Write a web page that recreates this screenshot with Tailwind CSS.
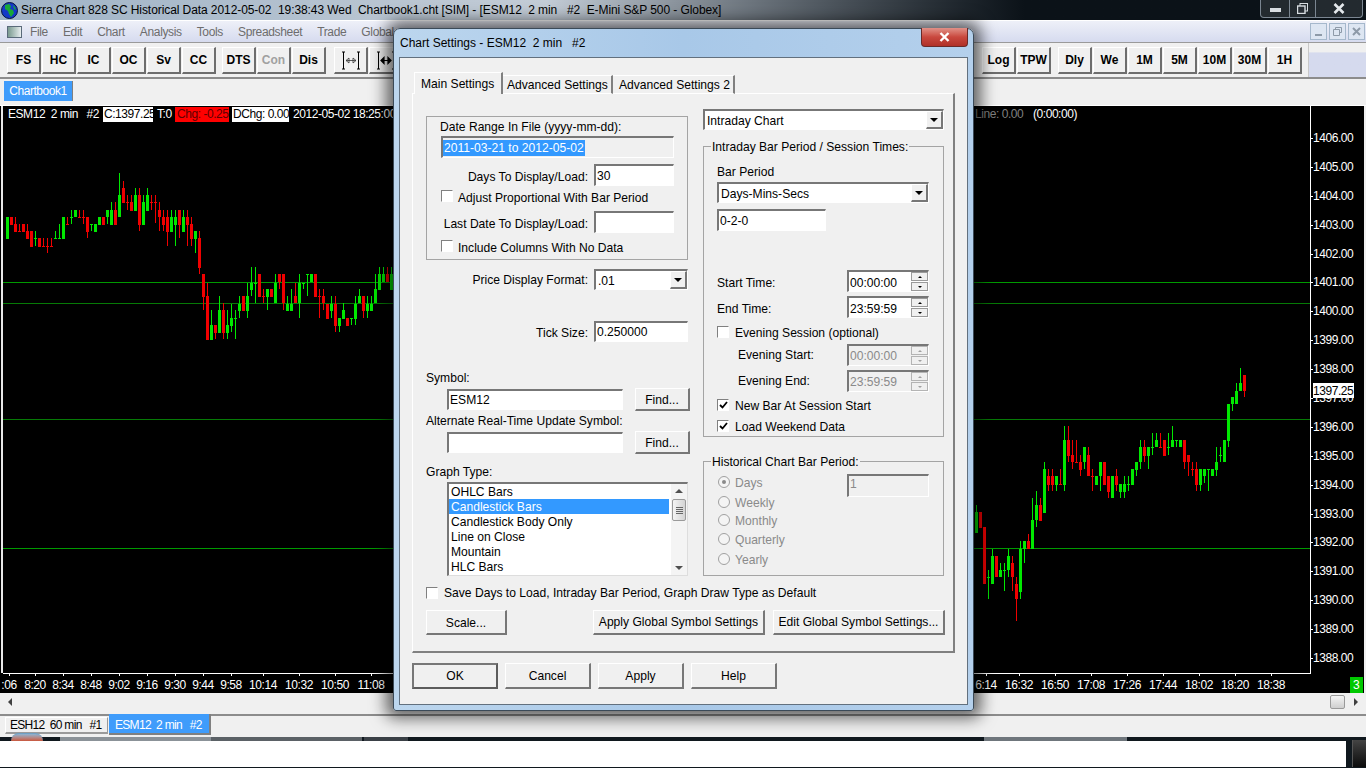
<!DOCTYPE html>
<html lang="en">
<head>
    <meta charset="UTF-8">
    <title>Sierra Chart - Chart Settings</title>
    <script src="https://cdn.jsdelivr.net/npm/@tailwindcss/browser@4"></script>
</head>
<body class="bg-black">
<div class="relative w-[1366px] h-[768px] overflow-hidden flex flex-col text-[12px] leading-[16px] text-black font-['Liberation_Sans',sans-serif]">

    <!-- app title bar -->
    <div class="h-[20px] shrink-0 flex items-center relative bg-linear-to-r from-[#9fb3c6] via-[#c3ccd6] via-40% to-[#0b1218] to-75%">
        <svg class="ml-[1px] w-[17px] h-[17px]" viewBox="0 0 17 17">
            <circle cx="8.5" cy="8.5" r="8" fill="#1438c8" stroke="#06143c"/>
            <path d="M4 3l4-1 2 2-1 3 3 1 1 3-3 4-2-3-1-3-3-2z" fill="#18a838"/>
            <path d="M12 3l2 2 1 3-2-1z" fill="#18a838"/>
        </svg>
        <span class="ml-[3px] whitespace-pre text-[12px] tracking-[-0.08px] text-black">Sierra Chart 828 SC Historical Data 2012-05-02  19:38:43 Wed  Chartbook1.cht [SIM] - [ESM12  2 min   #2  E-Mini S&amp;P 500 - Globex]</span>
        <div class="absolute left-[1260px] top-0 w-[103px] h-[18px] flex rounded-b-[4px] border border-t-0 border-[#7b8691] bg-white/10">
            <div class="w-[29px] flex items-center justify-center border-r border-[#7b8691]"><div class="w-[11px] h-[4px] bg-[#d8dde1] mt-[3px]"></div></div>
            <div class="w-[26px] flex items-center justify-center border-r border-[#7b8691]">
                <svg class="w-[11px] h-[11px]" viewBox="0 0 11 11"><rect x="3" y="0.5" width="7.5" height="7.5" fill="none" stroke="#d8dde1"/><rect x="0.5" y="3" width="7.5" height="7.5" fill="#2a3036" stroke="#d8dde1" stroke-width="1.4"/></svg>
            </div>
            <div class="flex-1 flex items-center justify-center">
                <svg class="w-[12px] h-[11px]" viewBox="0 0 12 11"><path d="M1.5 1l9 9M10.5 1l-9 9" stroke="#e4e8eb" stroke-width="2.6"/></svg>
            </div>
        </div>
    </div>

    <!-- menu bar -->
    <div class="h-[23px] shrink-0 border-t border-b border-t-white border-b-[#9a9a9a] flex items-center bg-linear-to-b from-[#eef0f8] to-[#d6dbef] relative">
        <div class="ml-[7px] w-[15px] h-[12px] border border-[#5a6a7a] bg-linear-to-r from-[#7a9a90] to-[#e8eef0]"></div>
        <div class="ml-[8px] flex gap-[15px] tracking-[-0.35px] text-[#6d6d6d]">
            <span>File</span><span>Edit</span><span>Chart</span><span>Analysis</span><span>Tools</span><span>Spreadsheet</span><span>Trade</span><span>Global</span>
        </div>
        <div class="absolute left-[1310px] top-[2px] flex gap-[2px]">
            <div class="w-[17px] h-[17px] border border-[#a5b8cc] bg-[#dde6f2] flex items-end justify-center pb-[3px]"><div class="w-[7px] h-[2px] bg-[#8d9aa8]"></div></div>
            <div class="w-[17px] h-[17px] border border-[#a5b8cc] bg-[#dde6f2] flex items-center justify-center">
                <svg class="w-[9px] h-[9px]" viewBox="0 0 9 9"><path d="M2.5 2.5v-2h6v5h-2M.5 2.5h6v6h-6z" fill="none" stroke="#8d9aa8"/></svg>
            </div>
            <div class="w-[17px] h-[17px] border border-[#a5b8cc] bg-[#dde6f2] flex items-center justify-center">
                <svg class="w-[9px] h-[9px]" viewBox="0 0 9 9"><path d="M1 1l7 7M8 1l-7 7" stroke="#8d9aa8" stroke-width="2"/></svg>
            </div>
        </div>
    </div>

    <!-- toolbar -->
    <div class="h-[36px] shrink-0 flex border-b-2 border-b-[#8c8c8c] bg-[#f0f0f0]">
        <div class="w-[1309px] pl-[7px] pr-[6px] pt-[4px] flex justify-between border-r border-r-[#c8c8c8] font-bold">
            <div class="flex">
                <div class="flex gap-[1px]">
                    <div class="w-[34px] h-[27px] flex items-center justify-center border-t border-l border-t-white border-l-white border-b-2 border-r-2 border-b-[#6d6d6d] border-r-[#6d6d6d]">FS</div>
                    <div class="w-[34px] h-[27px] flex items-center justify-center border-t border-l border-t-white border-l-white border-b-2 border-r-2 border-b-[#6d6d6d] border-r-[#6d6d6d]">HC</div>
                    <div class="w-[34px] h-[27px] flex items-center justify-center border-t border-l border-t-white border-l-white border-b-2 border-r-2 border-b-[#6d6d6d] border-r-[#6d6d6d]">IC</div>
                    <div class="w-[34px] h-[27px] flex items-center justify-center border-t border-l border-t-white border-l-white border-b-2 border-r-2 border-b-[#6d6d6d] border-r-[#6d6d6d]">OC</div>
                    <div class="w-[34px] h-[27px] flex items-center justify-center border-t border-l border-t-white border-l-white border-b-2 border-r-2 border-b-[#6d6d6d] border-r-[#6d6d6d]">Sv</div>
                    <div class="w-[34px] h-[27px] flex items-center justify-center border-t border-l border-t-white border-l-white border-b-2 border-r-2 border-b-[#6d6d6d] border-r-[#6d6d6d]">CC</div>
                </div>
                <div class="ml-[6px] flex gap-[1px]">
                    <div class="w-[34px] h-[27px] flex items-center justify-center border-t border-l border-t-white border-l-white border-b-2 border-r-2 border-b-[#6d6d6d] border-r-[#6d6d6d]">DTS</div>
                    <div class="w-[34px] h-[27px] flex items-center justify-center border-t border-l border-t-white border-l-white border-b-2 border-r-2 border-b-[#6d6d6d] border-r-[#6d6d6d] text-[#a0a0a0]">Con</div>
                    <div class="w-[34px] h-[27px] flex items-center justify-center border-t border-l border-t-white border-l-white border-b-2 border-r-2 border-b-[#6d6d6d] border-r-[#6d6d6d]">Dis</div>
                </div>
                <div class="ml-[8px] flex gap-[1px]">
                    <div class="w-[34px] h-[27px] flex items-center justify-center border-t border-l border-t-white border-l-white border-b-2 border-r-2 border-b-[#6d6d6d] border-r-[#6d6d6d]">
                        <svg class="w-[20px] h-[19px]" viewBox="0 0 20 19"><path d="M2.5 1v17M17.5 1v17M1 1h3M1 18h3M16 1h3M16 18h3" stroke="#000" fill="none"/><path d="M5 9.5h10M5 9.5l3-2.5v5zM15 9.5l-3-2.5v5z" stroke="#333" stroke-width="0.8" fill="none"/></svg>
                    </div>
                    <div class="w-[34px] h-[27px] flex items-center justify-center border-t border-l border-t-white border-l-white border-b-2 border-r-2 border-b-[#6d6d6d] border-r-[#6d6d6d]">
                        <svg class="w-[20px] h-[19px]" viewBox="0 0 20 19"><path d="M2.5 1v17M17.5 1v17M1 1h3M1 18h3M16 1h3M16 18h3" stroke="#000" fill="none"/><path d="M5 9.5h10M5 9.5l3-3v6zM15 9.5l-3-3v6z" stroke="#000" stroke-width="1.2" fill="#000"/></svg>
                    </div>
                </div>
            </div>
            <div class="flex">
                <div class="flex gap-[1px]">
                    <div class="w-[34px] h-[27px] flex items-center justify-center border-t border-l border-t-white border-l-white border-b-2 border-r-2 border-b-[#6d6d6d] border-r-[#6d6d6d]">Log</div>
                    <div class="w-[34px] h-[27px] flex items-center justify-center border-t border-l border-t-white border-l-white border-b-2 border-r-2 border-b-[#6d6d6d] border-r-[#6d6d6d]">TPW</div>
                </div>
                <div class="ml-[7px] flex gap-[1px]">
                    <div class="w-[34px] h-[27px] flex items-center justify-center border-t border-l border-t-white border-l-white border-b-2 border-r-2 border-b-[#6d6d6d] border-r-[#6d6d6d]">Dly</div>
                    <div class="w-[34px] h-[27px] flex items-center justify-center border-t border-l border-t-white border-l-white border-b-2 border-r-2 border-b-[#6d6d6d] border-r-[#6d6d6d]">We</div>
                    <div class="w-[34px] h-[27px] flex items-center justify-center border-t border-l border-t-white border-l-white border-b-2 border-r-2 border-b-[#6d6d6d] border-r-[#6d6d6d]">1M</div>
                    <div class="w-[34px] h-[27px] flex items-center justify-center border-t border-l border-t-white border-l-white border-b-2 border-r-2 border-b-[#6d6d6d] border-r-[#6d6d6d]">5M</div>
                    <div class="w-[34px] h-[27px] flex items-center justify-center border-t border-l border-t-white border-l-white border-b-2 border-r-2 border-b-[#6d6d6d] border-r-[#6d6d6d]">10M</div>
                    <div class="w-[34px] h-[27px] flex items-center justify-center border-t border-l border-t-white border-l-white border-b-2 border-r-2 border-b-[#6d6d6d] border-r-[#6d6d6d]">30M</div>
                    <div class="w-[34px] h-[27px] flex items-center justify-center border-t border-l border-t-white border-l-white border-b-2 border-r-2 border-b-[#6d6d6d] border-r-[#6d6d6d]">1H</div>
                </div>
            </div>
        </div>
        <div class="flex-1 bg-linear-to-b from-[#f0f0f0] from-25% to-[#d5daee] to-30%"></div>
    </div>

    <!-- chartbook tabs -->
    <div class="h-[27px] shrink-0 bg-[#f0f0f0] pl-[4px] pt-[2px] border-b border-b-white">
        <div class="w-[69px] h-[20px] bg-[#3f9cfb] text-white tracking-[-0.45px] flex items-center justify-center border-r border-r-[#808080]">Chartbook1</div>
    </div>

    <!-- chart, drawn by the script below -->
    <div class="h-[587px] shrink-0 bg-black">
        <svg id="chart" class="block" width="1366" height="587" viewBox="0 106 1366 587"></svg>
    </div>

    <!-- horizontal scroll bar -->
    <div class="h-[21px] shrink-0 bg-[#f0f0f0] flex items-center pr-[8px] pl-[8px] pb-[3px]">
        <div class="w-0 h-0 border-y-[4px] border-y-transparent border-r-[4px] border-r-[#404040]"></div>
        <div class="ml-auto w-[15px] h-[14px] rounded-[2px] border border-[#9a9a9a] bg-linear-to-b from-[#f4f4f4] to-[#cfcfcf]"></div>
        <div class="ml-[9px] w-0 h-0 border-y-[4px] border-y-transparent border-l-[4px] border-l-[#404040]"></div>
    </div>

    <!-- chart tabs -->
    <div class="h-[23px] shrink-0 bg-[#f0f0f0] border-t-2 border-t-[#8c8c8c] flex pl-[5px] items-start tracking-[-0.7px]">
        <div class="mt-[1px] w-[103px] h-[17px] flex items-center pl-[4px] whitespace-pre border-b-2 border-r border-b-[#9a9a9a] border-r-[#9a9a9a] border-t border-l border-t-white border-l-white">ESH12  60 min   #1</div>
        <div class="-mt-[2px] ml-[1px] w-[102px] h-[21px] bg-[#3f9cfb] text-white flex items-center pl-[6px] pt-[3px] whitespace-pre border-b-2 border-r-2 border-b-[#808080] border-r-[#808080]">ESM12  2 min   #2</div>
    </div>

    <!-- taskbar, mostly blanked out in the picture -->
    <div class="flex-1 bg-[#10181e] relative">
        <div class="h-[4px] flex">
            <div class="ml-[60px] w-[151px] bg-[#8b9298]"></div>
            <div class="w-[151px] bg-[#5b6166]"></div>
            <div class="ml-[2px] w-[44px] bg-[#3a4046]"></div>
            <div class="ml-[576px] w-[143px] bg-[#6f767c]"></div>
        </div>
        <div class="h-[26px] w-[1346px] bg-white"></div>
        <div class="absolute right-0 top-[3px] w-[14px] h-[27px] border-l border-[#555] bg-linear-to-b from-[#444] to-[#0c0c0c]"></div>
    </div>
    <div class="absolute left-[11px] top-[733px] w-[32px] h-[8px] rounded-t-full bg-linear-to-b from-[#8ab3d2] to-[#c9563a] border-t border-[#6fa0c4]"></div>

    <!-- Chart Settings dialog -->
    <div class="absolute left-[393px] top-[28px] w-[581px] h-[683px] rounded-t-[7px] rounded-b-[3px] border border-[#3b4a58] bg-linear-to-r from-[#bcd6ee] via-[#a8c8e8] to-[#b4d0ec] shadow-[0_0_16px_7px_rgba(0,0,0,0.6)] flex flex-col">
        <div class="h-[28px] shrink-0 relative pl-[6px] pt-[6px] whitespace-pre">Chart Settings - ESM12  2 min   #2
            <div class="absolute right-[5px] -top-[1px] w-[47px] h-[19px] rounded-b-[4px] border border-t-0 border-[#6a2a28] bg-linear-to-b from-[#e09088] via-[#c9483e] to-[#b03028] flex items-center justify-center">
                <svg class="w-[11px] h-[10px]" viewBox="0 0 11 10"><path d="M1.5 1l8 8M9.5 1l-8 8" stroke="#fff" stroke-width="2.4"/></svg>
            </div>
        </div>

        <div class="ml-[5px] w-[569px] h-[648px] border border-[#62707e] bg-[#f0f0f0] pt-[14px] pl-[12px] flex flex-col text-[12.1px]">
            <!-- tabs -->
            <div class="h-[22px] flex items-end pl-[2px] relative z-10">
                <div class="w-[89px] h-[22px] bg-[#f0f0f0] border-t border-l border-r-2 border-t-white border-l-white border-r-[#808080] pl-[6px] pt-[3px]">Main Settings</div>
                <div class="w-[110px] h-[19px] border-t border-r-2 border-t-white border-r-[#808080] pl-[4px] pt-[1px] border-b border-b-white">Advanced Settings</div>
                <div class="w-[122px] h-[19px] border-t border-r-2 border-t-white border-r-[#808080] pl-[6px] pt-[1px] border-b border-b-white">Advanced Settings 2</div>
            </div>

            <!-- tab panel -->
            <div class="-mt-[1px] w-[543px] h-[560px] border-t border-l border-r-2 border-b-2 border-t-white border-l-white border-r-[#808080] border-b-[#808080] pl-[13px] pt-[15px] flex flex-col">
                <div class="flex gap-[13px]">

                    <!-- left column -->
                    <div class="w-[264px] mt-[7px]">
                        <div class="w-[262px] h-[144px] border border-[#a4a4a4]">
                            <div class="mt-[2px] ml-[13px]">Date Range In File (yyyy-mm-dd):</div>
                            <div class="mt-[1px] ml-[14px] w-[233px] h-[22px] border-t-2 border-l-2 border-r border-b border-t-[#777] border-l-[#777] border-r-white border-b-white flex items-center"><span class="bg-[#3399ff] text-white px-[1px] h-[16px]">2011-03-21 to 2012-05-02</span></div>
                            <div class="mt-[6px] ml-[14px] w-[233px] flex items-center justify-end gap-[6px]">
                                <span class="mt-[4px]">Days To Display/Load:</span>
                                <div class="w-[80px] h-[22px] pl-[1px] pt-[2px] bg-white border-t-2 border-l-2 border-r border-b border-t-[#777] border-l-[#777] border-r-white border-b-white">30</div>
                            </div>
                            <div class="mt-[3px] ml-[14px] h-[16px] flex items-center gap-[5px]">
                                <div class="w-[12px] h-[12px] -mt-[2px] bg-white border-t border-l border-b border-r border-t-[#808080] border-l-[#808080] border-b-white border-r-white"></div>
                                <span class="mt-[2px]">Adjust Proportional With Bar Period</span>
                            </div>
                            <div class="mt-[6px] ml-[14px] w-[233px] flex items-center justify-end gap-[6px]">
                                <span class="mt-[4px]">Last Date To Display/Load:</span>
                                <div class="w-[80px] h-[22px] bg-white border-t-2 border-l-2 border-r border-b border-t-[#777] border-l-[#777] border-r-white border-b-white"></div>
                            </div>
                            <div class="mt-[6px] ml-[14px] h-[16px] flex items-center gap-[5px]">
                                <div class="w-[12px] h-[12px] -mt-[2px] bg-white border-t border-l border-b border-r border-t-[#808080] border-l-[#808080] border-b-white border-r-white"></div>
                                <span class="mt-[2px]">Include Columns With No Data</span>
                            </div>
                        </div>

                        <div class="mt-[9px] w-[262px] flex items-center justify-end gap-[6px]">
                            <span>Price Display Format:</span>
                            <div class="w-[94px] h-[21px] pl-[2px] bg-white border-t-2 border-l-2 border-r border-b border-t-[#777] border-l-[#777] border-r-white border-b-white flex items-center justify-between">
                                <span class="mt-[2px]">.01</span>
                                <div class="w-[17px] h-[18px] bg-[#f0f0f0] border-t border-l border-b-2 border-r-2 border-t-white border-l-white border-b-[#777] border-r-[#777] flex items-center justify-center"><div class="w-0 h-0 border-x-[4px] border-x-transparent border-t-[4px] border-t-black"></div></div>
                            </div>
                        </div>
                        <div class="mt-[31px] w-[262px] flex items-center justify-end gap-[6px]">
                            <span class="mt-[2px]">Tick Size:</span>
                            <div class="w-[94px] h-[21px] pl-[1px] pt-[1px] bg-white border-t-2 border-l-2 border-r border-b border-t-[#777] border-l-[#777] border-r-white border-b-white">0.250000</div>
                        </div>

                        <div class="mt-[28px]">Symbol:</div>
                        <div class="mt-[2px] h-[23px] pl-[21px] flex items-center gap-[12px]">
                            <div class="w-[176px] h-[21px] pl-[1px] pt-[1px] bg-white border-t-2 border-l-2 border-r border-b border-t-[#777] border-l-[#777] border-r-white border-b-white">ESM12</div>
                            <div class="w-[55px] h-[23px] pt-[1px] bg-[#f0f0f0] border-t border-l border-b-2 border-r-2 border-t-white border-l-white border-b-[#777] border-r-[#777] flex items-center justify-center">Find...</div>
                        </div>
                        <div class="mt-[2px]">Alternate Real-Time Update Symbol:</div>
                        <div class="mt-[2px] h-[23px] pl-[21px] flex items-center gap-[12px]">
                            <div class="w-[176px] h-[21px] bg-white border-t-2 border-l-2 border-r border-b border-t-[#777] border-l-[#777] border-r-white border-b-white"></div>
                            <div class="w-[55px] h-[23px] pt-[2px] bg-[#f0f0f0] border-t border-l border-b-2 border-r-2 border-t-white border-l-white border-b-[#777] border-r-[#777] flex items-center justify-center">Find...</div>
                        </div>

                        <div class="mt-[10px]">Graph Type:</div>
                        <div class="mt-[2px] ml-[21px] w-[241px] h-[94px] bg-white border-t-2 border-l-2 border-r border-b border-t-[#777] border-l-[#777] border-r-[#ddd] border-b-[#ddd] flex">
                            <div class="w-[220px] leading-[17px]">
                                <div class="h-[15px] pl-[2px]">OHLC Bars</div>
                                <div class="h-[15px] pl-[2px] bg-[#3399ff] text-white">Candlestick Bars</div>
                                <div class="h-[15px] pl-[2px]">Candlestick Body Only</div>
                                <div class="h-[15px] pl-[2px]">Line on Close</div>
                                <div class="h-[15px] pl-[2px]">Mountain</div>
                                <div class="h-[15px] pl-[2px]">HLC Bars</div>
                            </div>
                            <div class="ml-[2px] w-[16px] flex flex-col items-center bg-[#f4f4f4] pt-[5px]">
                                <div class="w-0 h-0 border-x-[4px] border-x-transparent border-b-[4px] border-b-[#505050]"></div>
                                <div class="mt-[6px] w-[14px] h-[22px] rounded-[2px] border border-[#9a9a9a] bg-linear-to-r from-[#f4f4f4] to-[#d4d4d4] flex flex-col items-center justify-center gap-[1px]">
                                    <div class="w-[7px] h-[1px] bg-[#666]"></div><div class="w-[7px] h-[1px] bg-[#666]"></div><div class="w-[7px] h-[1px] bg-[#666]"></div><div class="w-[7px] h-[1px] bg-[#666]"></div>
                                </div>
                                <div class="mt-auto mb-[5px] w-0 h-0 border-x-[4px] border-x-transparent border-t-[4px] border-t-[#505050]"></div>
                            </div>
                        </div>
                    </div>

                    <!-- right column -->
                    <div class="w-[241px]">
                        <div class="h-[21px] pl-[2px] bg-white border-t-2 border-l-2 border-r border-b border-t-[#777] border-l-[#777] border-r-white border-b-white flex items-center justify-between">
                            <span class="mt-[2px]">Intraday Chart</span>
                            <div class="w-[17px] h-[18px] bg-[#f0f0f0] border-t border-l border-b-2 border-r-2 border-t-white border-l-white border-b-[#777] border-r-[#777] flex items-center justify-center"><div class="w-0 h-0 border-x-[4px] border-x-transparent border-t-[4px] border-t-black"></div></div>
                        </div>

                        <div class="relative mt-[16px] h-[291px] border border-[#a4a4a4] pl-[13px]">
                            <div class="absolute left-[7px] -top-[8px] bg-[#f0f0f0] px-[1px]">Intraday Bar Period / Session Times:</div>
                            <div class="mt-[17px]">Bar Period</div>
                            <div class="mt-[2px] w-[212px] h-[21px] pl-[2px] bg-white border-t-2 border-l-2 border-r border-b border-t-[#777] border-l-[#777] border-r-white border-b-white flex items-center justify-between">
                                <span class="mt-[2px]">Days-Mins-Secs</span>
                                <div class="w-[17px] h-[18px] bg-[#f0f0f0] border-t border-l border-b-2 border-r-2 border-t-white border-l-white border-b-[#777] border-r-[#777] flex items-center justify-center"><div class="w-0 h-0 border-x-[4px] border-x-transparent border-t-[4px] border-t-black"></div></div>
                            </div>
                            <div class="mt-[6px] w-[109px] h-[22px] pl-[1px] pt-[2px] bg-white border-t-2 border-l-2 border-r border-b border-t-[#777] border-l-[#777] border-r-white border-b-white">0-2-0</div>

                            <div class="mt-[39px] w-[212px] flex items-center justify-between">
                                <span class="mt-[4px]">Start Time:</span>
                                <div class="w-[82px] h-[22px] pl-[1px] bg-white border-t-2 border-l-2 border-r border-b border-t-[#777] border-l-[#777] border-r-white border-b-white flex items-center justify-between">
                                    <span class="mt-[2px]">00:00:00</span>
                                    <div class="w-[17px] flex flex-col gap-[1px]">
                                        <div class="h-[9px] bg-[#f0f0f0] border border-[#9a9a9a] flex items-center justify-center"><div class="w-0 h-0 border-x-[2px] border-x-transparent border-b-[2px] border-b-black"></div></div>
                                        <div class="h-[9px] bg-[#f0f0f0] border border-[#9a9a9a] flex items-center justify-center"><div class="w-0 h-0 border-x-[2px] border-x-transparent border-t-[2px] border-t-black"></div></div>
                                    </div>
                                </div>
                            </div>
                            <div class="mt-[4px] w-[212px] flex items-center justify-between">
                                <span class="mt-[4px]">End Time:</span>
                                <div class="w-[82px] h-[22px] pl-[1px] bg-white border-t-2 border-l-2 border-r border-b border-t-[#777] border-l-[#777] border-r-white border-b-white flex items-center justify-between">
                                    <span class="mt-[2px]">23:59:59</span>
                                    <div class="w-[17px] flex flex-col gap-[1px]">
                                        <div class="h-[9px] bg-[#f0f0f0] border border-[#9a9a9a] flex items-center justify-center"><div class="w-0 h-0 border-x-[2px] border-x-transparent border-b-[2px] border-b-black"></div></div>
                                        <div class="h-[9px] bg-[#f0f0f0] border border-[#9a9a9a] flex items-center justify-center"><div class="w-0 h-0 border-x-[2px] border-x-transparent border-t-[2px] border-t-black"></div></div>
                                    </div>
                                </div>
                            </div>
                            <div class="mt-[7px] h-[16px] flex items-center gap-[6px]">
                                <div class="w-[12px] h-[12px] -mt-[2px] bg-white border-t border-l border-b border-r border-t-[#808080] border-l-[#808080] border-b-white border-r-white"></div>
                                <span>Evening Session (optional)</span>
                            </div>
                            <div class="mt-[3px] w-[212px] pl-[21px] flex items-center justify-between">
                                <span>Evening Start:</span>
                                <div class="w-[82px] h-[22px] pl-[1px] text-[#8a8a8a] border-t-2 border-l-2 border-r border-b border-t-[#777] border-l-[#777] border-r-white border-b-white flex items-center justify-between">
                                    <span>00:00:00</span>
                                    <div class="w-[17px] flex flex-col gap-[1px]">
                                        <div class="h-[9px] bg-[#f0f0f0] border border-[#b4b4b4] flex items-center justify-center"><div class="w-0 h-0 border-x-[2px] border-x-transparent border-b-[2px] border-b-[#a0a0a0]"></div></div>
                                        <div class="h-[9px] bg-[#f0f0f0] border border-[#b4b4b4] flex items-center justify-center"><div class="w-0 h-0 border-x-[2px] border-x-transparent border-t-[2px] border-t-[#a0a0a0]"></div></div>
                                    </div>
                                </div>
                            </div>
                            <div class="mt-[4px] w-[212px] pl-[21px] flex items-center justify-between">
                                <span>Evening End:</span>
                                <div class="w-[82px] h-[22px] pl-[1px] text-[#8a8a8a] border-t-2 border-l-2 border-r border-b border-t-[#777] border-l-[#777] border-r-white border-b-white flex items-center justify-between">
                                    <span>23:59:59</span>
                                    <div class="w-[17px] flex flex-col gap-[1px]">
                                        <div class="h-[9px] bg-[#f0f0f0] border border-[#b4b4b4] flex items-center justify-center"><div class="w-0 h-0 border-x-[2px] border-x-transparent border-b-[2px] border-b-[#a0a0a0]"></div></div>
                                        <div class="h-[9px] bg-[#f0f0f0] border border-[#b4b4b4] flex items-center justify-center"><div class="w-0 h-0 border-x-[2px] border-x-transparent border-t-[2px] border-t-[#a0a0a0]"></div></div>
                                    </div>
                                </div>
                            </div>
                            <div class="mt-[6px] h-[16px] flex items-center gap-[6px]">
                                <div class="w-[12px] h-[12px] -mt-[2px] bg-white border-t border-l border-b border-r border-t-[#808080] border-l-[#808080] border-b-white border-r-white flex items-center justify-center">
                                    <svg class="w-[9px] h-[8px]" viewBox="0 0 9 8"><path d="M1 4l2.5 2.5L8 1" fill="none" stroke="#000" stroke-width="1.8"/></svg>
                                </div>
                                <span>New Bar At Session Start</span>
                            </div>
                            <div class="mt-[5px] h-[16px] flex items-center gap-[6px]">
                                <div class="w-[12px] h-[12px] -mt-[2px] bg-white border-t border-l border-b border-r border-t-[#808080] border-l-[#808080] border-b-white border-r-white flex items-center justify-center">
                                    <svg class="w-[9px] h-[8px]" viewBox="0 0 9 8"><path d="M1 4l2.5 2.5L8 1" fill="none" stroke="#000" stroke-width="1.8"/></svg>
                                </div>
                                <span>Load Weekend Data</span>
                            </div>
                        </div>

                        <div class="relative mt-[24px] h-[115px] border border-[#a4a4a4] pl-[14px] flex">
                            <div class="absolute left-[7px] -top-[8px] bg-[#f0f0f0] px-[1px]">Historical Chart Bar Period:</div>
                            <div class="w-[129px] pt-[13px] text-[#8a8a8a]">
                                <div class="h-[16px] flex items-center gap-[5px]">
                                    <div class="w-[12px] h-[12px] -mt-[2px] rounded-full border border-[#a0a0a0] bg-[#f4f4f4] flex items-center justify-center"><div class="w-[4px] h-[4px] rounded-full bg-[#8a8a8a]"></div></div><span>Days</span>
                                </div>
                                <div class="mt-[4px] h-[16px] flex items-center gap-[5px]">
                                    <div class="w-[12px] h-[12px] -mt-[2px] rounded-full border border-[#a0a0a0] bg-[#f4f4f4]"></div><span>Weekly</span>
                                </div>
                                <div class="mt-[2px] h-[16px] flex items-center gap-[5px]">
                                    <div class="w-[12px] h-[12px] -mt-[2px] rounded-full border border-[#a0a0a0] bg-[#f4f4f4]"></div><span>Monthly</span>
                                </div>
                                <div class="mt-[3px] h-[16px] flex items-center gap-[5px]">
                                    <div class="w-[12px] h-[12px] -mt-[2px] rounded-full border border-[#a0a0a0] bg-[#f4f4f4]"></div><span>Quarterly</span>
                                </div>
                                <div class="mt-[4px] h-[16px] flex items-center gap-[5px]">
                                    <div class="w-[12px] h-[12px] -mt-[2px] rounded-full border border-[#a0a0a0] bg-[#f4f4f4]"></div><span>Yearly</span>
                                </div>
                            </div>
                            <div class="mt-[12px] w-[82px] h-[23px] pl-[1px] text-[#8a8a8a] border-t-2 border-l-2 border-r border-b border-t-[#777] border-l-[#777] border-r-white border-b-white">1</div>
                        </div>
                    </div>
                </div>

                <div class="mt-[9px] h-[16px] flex items-center gap-[6px]">
                    <div class="w-[12px] h-[12px] -mt-[1px] bg-white border-t border-l border-b border-r border-t-[#808080] border-l-[#808080] border-b-white border-r-white"></div>
                    <span>Save Days to Load, Intraday Bar Period, Graph Draw Type as Default</span>
                </div>
                <div class="mt-[9px] flex">
                    <div class="w-[81px] h-[25px] pt-[1px] border-t border-l border-b-2 border-r-2 border-t-white border-l-white border-b-[#777] border-r-[#777] flex items-center justify-center">Scale...</div>
                    <div class="ml-[86px] w-[172px] h-[25px] border-t border-l border-b-2 border-r-2 border-t-white border-l-white border-b-[#777] border-r-[#777] flex items-center justify-center">Apply Global Symbol Settings</div>
                    <div class="ml-[8px] w-[172px] h-[25px] border-t border-l border-b-2 border-r-2 border-t-white border-l-white border-b-[#777] border-r-[#777] flex items-center justify-center">Edit Global Symbol Settings...</div>
                </div>
            </div>

            <!-- dialog buttons -->
            <div class="mt-[10px] flex gap-[7px]">
                <div class="w-[86px] h-[26px] border-2 border-t-[#777] border-l-[#777] border-b-[#5c5c5c] border-r-[#5c5c5c] flex items-center justify-center">OK</div>
                <div class="w-[86px] h-[26px] border-t border-l border-b-2 border-r-2 border-t-white border-l-white border-b-[#777] border-r-[#777] flex items-center justify-center">Cancel</div>
                <div class="w-[86px] h-[26px] border-t border-l border-b-2 border-r-2 border-t-white border-l-white border-b-[#777] border-r-[#777] flex items-center justify-center">Apply</div>
                <div class="w-[86px] h-[26px] border-t border-l border-b-2 border-r-2 border-t-white border-l-white border-b-[#777] border-r-[#777] flex items-center justify-center">Help</div>
            </div>
        </div>
    </div>
</div>

<script>
    // candles read off the picture: colour, body top, body bottom, wick top, wick bottom
    // values are zoomed pixels (3x), x goes up by 4px per bar
    const leftBars = [
        ['g',172,236],['r',172,194],['r',192,215,172],['r',214,214,193],['r',193,215],['r',214,236,193],['r',214,260],
        ['g',235,235,214,258],['r',235,260],['r',259,259,235],['r',259,259,235,278],['r',259,259,235],['g',235,235,214],['g',235,235,193],
        ['g',172,236],['r',193,193,172],['g',172,172,151,193],['g',151,172],['r',172,172,151],['r',172,172,151,193],['r',172,215,172,234],
        ['g',193,193,193,214],['g',193,215],['g',172,194],['r',172,194],['g',151,172,151,193],['g',151,194,127],['r',151,194,127],
        ['g',106,172,40],['r',85,128,64],['r',127,127,106,150],['r',127,152,106],['g',106,152,85],['r',106,194,85,212],['g',127,194,106],
        ['g',106,152,85],['r',127,127,106,150],['r',127,127,106,190],['r',151,172,127,212],['r',172,194,151,212],['r',172,215,151,257],
        ['g',172,215,151],['g',172,194,151,257],['r',151,194,151,234],['g',172,215,151],['r',172,194,151,257],['r',193,236,172,257],
        ['g',214,236,214,278],['r',235,323,214,342],['r',343,411,343,450],['r',408,539,370],['g',496,539,450],['r',496,518,496,538],
        ['g',451,518,408],['r',451,518,430,538],['g',496,518,450,536],['g',475,497,432,516],['g',475,475,450,536],['g',431,453,408,474],
        ['r',408,453],['g',408,453,370,474],['g',369,389,321,408],['g',369,369,321,430],['r',343,411],['r',409,409,388,430],
        ['g',388,411,388,450],['r',388,411],['g',369,430,343],['r',343,366,343,388],['r',343,430,343,450],['g',431,453,408],['g',431,453,388],
        ['r',408,430,370],['g',369,430,343,474],['g',369,369,369,388],['g',343,343,343,408],['g',343,366],['r',343,411],['r',409,409,388,474],
        ['r',408,430,388,450],['r',431,476],['g',431,453,408,474],['r',431,497,408,516],['g',475,497,475,516],['g',451,476,430],['r',475,497],
        ['g',475,475,475,495],['g',431,476,408,495],['g',408,430,388],['r',408,453,408,474],['g',431,453,408,474],['g',431,453,408],
        ['g',388,430,343],['g',343,389,321],['g',343,366,321],['r',343,366,321],['g',343,389,321]
    ];
    const rightBars = [
        ['g',457,520,436],['r',457,505],['r',502,673],['g',652,652,630,716],['g',589,673,567],['r',589,652],['g',631,652,610],['g',631,631,610,694],
        ['g',589,631,567,652],['r',610,652,589,694],['r',673,718,652,782],['g',567,697,544,716],['g',544,566,544,608],['r',544,566,522],
        ['g',481,566,415],['g',436,481,394,500],['r',436,482,415],['g',328,458,306],['r',349,374,328,392],['r',349,374,328,392],['g',349,374,349,392],
        ['r',373,373,328],['g',240,374,198,392],['r',240,287,198,306],['r',286,307,240,328],['r',307,307,240],['r',307,329,286,348],['g',262,307,262,328],
        ['r',286,349,262],['r',349,349,328,392],['g',349,374],['g',307,349,307,392],['r',307,374],['r',349,395,349,415],['g',349,415],['r',349,374,328,392],
        ['g',373,395,373,413],['g',373,395,349,413],['g',373,373,349,392],['g',328,374],['g',307,329,307,348],['g',262,307,240,328],['r',262,287,240,306],
        ['g',262,287,262,328],['g',262,262,220,285],['g',240,262,220],['r',262,262,220],['r',240,287],['g',262,262,220,285],['g',240,262,198],
        ['g',240,240,240,262],['g',240,262],['r',240,307,240,328],['r',286,307,286,348],['r',328,328,307,348],['r',328,374,307,392],['g',328,374,328,392],
        ['g',328,349,328,370],['g',328,328,328,392],['g',328,349],['g',307,329,262,348],['g',286,286,262,306],['g',240,307],['g',133,242,133,262],
        ['g',112,133,112,152],['g',92,133,70],['g',70,92,24],['r',46,92,46,110]
    ];

    let svg = '';
    function rect(x, y, w, h, fill) {
        svg += `<rect x="${x}" y="${y}" width="${w}" height="${h}" fill="${fill}"/>`;
    }
    function label(x, y, str, fill, anchor) {
        svg += `<text x="${x}" y="${y}" fill="${fill}" text-anchor="${anchor || 'start'}" font-family="Liberation Sans" font-size="12" letter-spacing="-0.45" xml:space="preserve">${str}</text>`;
    }
    function drawBars(bars, x0, y0, start) {
        bars.forEach(function (b, i) {
            const color = b[0] === 'g' ? '#00e800' : '#f00000';
            const x = Math.round(x0 + (start + 12 * i) / 3);
            const top = Math.round(y0 + b[1] / 3);
            const bot = Math.round(y0 + b[2] / 3);
            const wTop = Math.round(y0 + (b[3] === undefined ? b[1] : b[3]) / 3);
            const wBot = Math.round(y0 + (b[4] === undefined ? b[2] : b[4]) / 3);
            rect(x, wTop, 1, Math.max(wBot - wTop, 1), color);
            rect(x - 1, top, 3, Math.max(bot - top, 1), color);
        });
    }

    // frame of the plot
    rect(1, 106, 2, 567, '#e8e8e8');
    rect(1364, 106, 2, 587, '#f0f0f0');
    rect(3, 673, 1308, 1, '#ffffff');
    rect(1310, 106, 1, 568, '#ffffff');

    // study lines
    rect(3, 282, 1307, 1, '#009a00');
    rect(3, 303, 1307, 1, '#067a06');
    rect(3, 419, 1307, 1, '#067a06');
    rect(3, 548, 1307, 1, '#009a00');

    drawBars(leftBars, 0, 160, 22);
    drawBars(rightBars, 975, 360, 2);

    // price axis
    for (let p = 1406; p >= 1388; p--) {
        const y = Math.round(138 + (1406 - p) * 28.89);
        rect(1310, y, 3, 1, '#ffffff');
        label(1313, y + 4, p + '.00', '#ffffff');
    }
    rect(1313, 383, 41, 15, '#ffffff');
    label(1313, 395, '1397.25', '#000000');

    // time axis
    const times = [[9,':06'],[35,'8:20'],[63,'8:34'],[91,'8:48'],[119,'9:02'],[147,'9:16'],[175,'9:30'],[203,'9:44'],[231,'9:58'],
        [263,'10:14'],[299,'10:32'],[335,'10:50'],[371,'11:08'],[986,'6:14'],[1019,'16:32'],[1055,'16:50'],[1091,'17:08'],
        [1127,'17:26'],[1163,'17:44'],[1199,'18:02'],[1235,'18:20'],[1271,'18:38']];
    times.forEach(function (t) {
        rect(t[0], 673, 1, 3, '#ffffff');
        label(t[0], 689, t[1], '#ffffff', 'middle');
    });
    rect(1350, 677, 13, 16, '#00c800');
    label(1356, 689, '3', '#ffffff', 'middle');

    // header line of the chart
    rect(103, 107, 50, 15, '#ffffff');
    rect(175, 107, 54, 15, '#ff0000');
    rect(232, 107, 57, 15, '#ffffff');
    label(8, 118, 'ESM12  2 min   #2', '#ffffff');
    label(104, 118, 'C:1397.25', '#000000');
    label(157, 118, 'T:0', '#ffffff');
    label(177, 118, 'Chg: -0.25', '#600000');
    label(233, 118, 'DChg: 0.00', '#000000');
    label(293, 118, '2012-05-02 18:25:00', '#ffffff');
    label(975, 118, 'Line: 0.00', '#808080');
    label(1033, 118, '(0:00:00)', '#ffffff');

    document.getElementById('chart').innerHTML = svg;
</script>
</body>
</html>
